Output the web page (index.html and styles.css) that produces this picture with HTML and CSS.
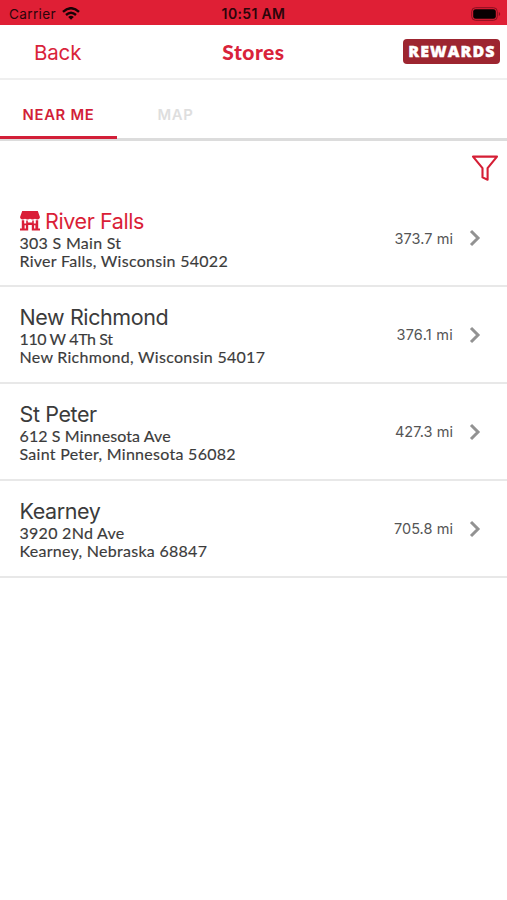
FILE: index.html
```html
<!DOCTYPE html>
<html lang="en">
<head>
<meta charset="utf-8">
<title>Stores</title>
<link rel="stylesheet" href="styles.css">
</head>
<body>
<div class="status">
  <div class="carrier"><span>Carrier</span>
    <svg class="wifi" width="18" height="13" viewBox="0 0 18 13" fill="none" stroke="currentColor" stroke-width="2.4"><path d="M1 4.8Q9-2.4 17 4.8M4 8Q9 3.6 14 8"/><path d="M6.2 10Q9 7.6 11.8 10L9 12.8Z" fill="currentColor" stroke="none"/></svg>
  </div>
  <span class="time">10:51 AM</span>
  <svg class="battery" width="30" height="14" viewBox="0 0 30 14"><rect x=".7" y=".7" width="25.6" height="12.6" rx="3.8" fill="none" stroke="#890f20" stroke-width="1"/><rect x="2.2" y="2.2" width="22.6" height="9.6" rx="2.4" fill="#080002"/><path d="M27.8 5Q29.2 5.5 29.2 7T27.8 9Z" fill="#890f20"/></svg>
</div>
<header class="header">
  <span class="back">Back</span>
  <h1 class="title">Stores</h1>
  <span class="rewards">REWARDS</span>
</header>
<nav class="tabs">
  <span class="tab active">NEAR ME</span>
  <span class="tab">MAP</span>
</nav>
<div class="filter">
  <svg width="28" height="28" viewBox="0 0 28 28" fill="none" stroke="#d51e35" stroke-width="2.1" stroke-linejoin="round"><path d="M2 2.6H26L16.6 14.2V25.8L11.5 23.4V14.2Z"/></svg>
</div>
<main>
  <section class="store">
    <div class="info">
      <h2 class="name home"><svg width="20" height="20" viewBox="0 0 20 20" fill="currentColor"><path d="M2.2 0H17.8L20 6.2Q19.5 8.5 17.4 8.5Q15.9 8.5 15 7.8Q14 8.5 12.5 8.5T10 7.8Q9 8.5 7.5 8.5T5 7.8Q4.1 8.5 2.6 8.5Q.5 8.5 0 6.2Z"/><path d="M1.8 9.2H4.2V12.5H6.2V9.6H7.8V11.5H12.2V9.6H13.8V12.5H15.8V9.2H18.2V17.6H20V19.5H11.8V14H8.2V19.5H0V17.6H1.8Z"/><path d="M4.6 14.2H5.9V17.5H4.6ZM14.1 14.2H15.4V17.5H14.1Z" fill="#fff"/></svg><span>River Falls</span></h2>
      <p>303 S Main St</p><p>River Falls, Wisconsin 54022</p>
    </div>
    <span class="miles">373.7 mi</span><svg class="chev" width="12" height="18" viewBox="0 0 12 18"><path d="M2 2L9 9L2 16"/></svg>
  </section>
  <section class="store">
    <div class="info"><h2 class="name">New Richmond</h2><p class="tight">110 W 4Th St</p><p>New Richmond, Wisconsin 54017</p></div>
    <span class="miles wide">376.1 mi</span><svg class="chev" width="12" height="18" viewBox="0 0 12 18"><path d="M2 2L9 9L2 16"/></svg>
  </section>
  <section class="store">
    <div class="info"><h2 class="name">St Peter</h2><p class="snug">612 S Minnesota Ave</p><p>Saint Peter, Minnesota 56082</p></div>
    <span class="miles">427.3 mi</span><svg class="chev" width="12" height="18" viewBox="0 0 12 18"><path d="M2 2L9 9L2 16"/></svg>
  </section>
  <section class="store">
    <div class="info"><h2 class="name">Kearney</h2><p>3920 2Nd Ave</p><p>Kearney, Nebraska 68847</p></div>
    <span class="miles">705.8 mi</span><svg class="chev" width="12" height="18" viewBox="0 0 12 18"><path d="M2 2L9 9L2 16"/></svg>
  </section>
</main>
</body>
</html>
```
FILE: styles.css
```css
* { box-sizing: border-box; }
body { margin: 0; background: #fff; font-family: Inter, sans-serif; color: #3b3b3b; }
h1, h2, p { margin: 0; font-weight: 400; }
svg { display: block; flex: none; }
.status { height: 25px; background: #df1f35; color: #2b050a; display: grid; grid-template-columns: 1fr auto 1fr; align-items: center; padding: 2px 6px 0 9px; font-size: 13.6px; }
.carrier { display: flex; align-items: center; gap: 6px; letter-spacing: .35px; }
.wifi { color: #180205; }
.time { font-size: 14px; font-weight: 600; letter-spacing: .35px; margin-right: 3px; }
.battery { justify-self: end; }
.header { height: 55px; border-bottom: 2px solid #efefef; display: grid; grid-template-columns: 1fr 64px 1fr; align-items: center; padding: 0 7px 0 7px; color: #d9233a; }
.back { font-size: 20.5px; letter-spacing: -.15px; padding: 2px 0 0 27px; }
.title { font: 900 21px/24px Lato, sans-serif; letter-spacing: .5px; text-align: center; white-space: nowrap; }
.rewards { justify-self: end; width: 97px; height: 25px; border-radius: 4px; background: #9d2530; color: #fff; font: 800 16px/25px "Open Sans", sans-serif; letter-spacing: 1.1px; text-indent: 1px; text-align: center; -webkit-text-stroke: .4px #fff; }
.tabs { height: 61px; display: flex; border-bottom: 3px solid #dcdcdc; }
.tab { width: 117px; height: 58px; display: flex; align-items: center; justify-content: center; padding-top: 11px; font-size: 14.8px; font-weight: 600; letter-spacing: .7px; color: #dedede; }
.tab.active { height: 59px; color: #d21f38; border-bottom: 3px solid #d21f38; padding-top: 14px; }
.filter { height: 49px; display: flex; justify-content: flex-end; padding: 13px 8px 0 0; }
.store { height: 97px; border-bottom: 2px solid #e8e8e8; display: flex; align-items: center; padding: 0 26px 0 19.5px; }
.store:first-child { height: 97px; padding-top: 1px; }
.info { flex: 1; padding-top: 2px; }
.name { font-size: 21.5px; line-height: 25px; letter-spacing: -.4px; white-space: nowrap; }
.home { display: flex; align-items: center; gap: 5.5px; color: #da1e37; }
.info p { font: 400 16px/17.6px Lato, sans-serif; letter-spacing: .28px; white-space: nowrap; -webkit-text-stroke: .15px currentColor; }
.info .tight { letter-spacing: -.4px; }
.info .snug { letter-spacing: .1px; }
.miles { font-size: 14.5px; letter-spacing: .05px; color: #555; margin-right: 16px; }
.miles.wide { letter-spacing: .25px; }
.chev { fill: none; stroke: #929292; stroke-width: 3; }
```
